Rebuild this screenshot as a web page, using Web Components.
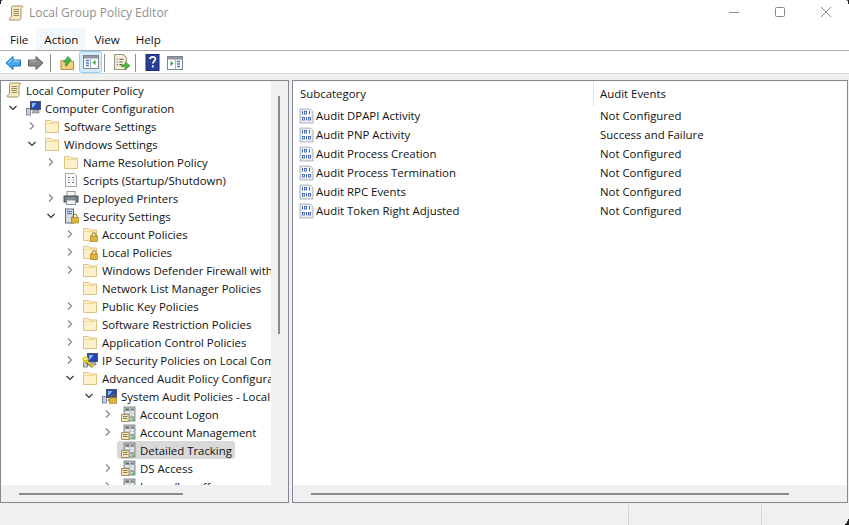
<!DOCTYPE html>
<html>
<head>
<meta charset="utf-8">
<title>Local Group Policy Editor</title>
<style>
    html, body { margin: 0; height: 100%; overflow: hidden; }
    body { font-family: "Open Sans", "Noto Sans", "Liberation Sans", sans-serif; font-size: 11.4px; color: #111; background: #f0f0f0; }
</style>
</head>
<body>
<gp-window>
    <gp-titlebar slot="title">Local Group Policy Editor</gp-titlebar>
    <gp-menubar slot="menu"></gp-menubar>
    <gp-toolbar slot="tools"></gp-toolbar>
    <gp-tree slot="left"></gp-tree>
    <gp-list slot="right"></gp-list>
    <gp-statusbar slot="status"></gp-statusbar>
</gp-window>

<script>
const lockShape = (x, y) => `
    <path d="M${x + 1.5} ${y + 3}v-1.2a2 2 0 0 1 4 0V${y + 3}" fill="none" stroke="#8a6a1c" stroke-width="1"/>
    <rect x="${x}" y="${y + 3}" width="7" height="5.5" fill="#e2b437" stroke="#a67f1e" stroke-width=".7"/>`;

const folderShape = `
    <path d="M1.500 2.500h5l1.200 1.500h6.800v10.500h-13z" fill="#fdf1cb" stroke="#dfc27f"/>
    <path d="M2.500 5.500h11" stroke="#f3d994"/>`;

const computerShape = `
    <rect x="1.500" y="8.500" width="4" height="6.500" fill="#c9ced6" stroke="#6c7585" stroke-width=".8"/>
    <rect x="5.500" y="1.500" width="10" height="8" fill="#2446b8" stroke="#4f5663"/>
    <path d="M7 3h4.500l-3.500 4.500H7z" fill="#86b6f5"/>
    <path d="M8 10.500h6v2.500H7z" fill="#aeb4bd" stroke="#6d7480" stroke-width=".6"/>`;

// one = a stroke, zero = a small hollow box, same as the tiny bit pattern on the audit pages
const bitOne = (x, y) => `<path d="M${x + .5} ${y}v3.500" stroke="#3f63b0"/>`;
const bitZero = (x, y) => `<rect x="${x + .5}" y="${y + .5}" width="2" height="2.500" fill="none" stroke="#3f63b0" stroke-width=".9"/>`;

const ICONS = {
    scroll: `<path d="M3.500 2.500c0-1 .6-1.500 1.500-1.500h9c.8 0 1 .9.5 1.500-.4.5-1.500.5-1.500 1.500v8.500c0 1.500-.8 2.500-2 2.500H2c-1 0-1.300-1-.6-1.600.8-.6 2.100-.9 2.100-2.400z" fill="#f5eac0" stroke="#a09268"/>
        <path d="M5.500 4.500h5.500M5.500 6.500h5.500M5.500 8.500h5.500M5.500 10.500h5.500" stroke="#94895f"/>`,
    computer: computerShape,
    folder: folderShape,
    folderlock: folderShape + lockShape(8.500, 7),
    scripts: `<path d="M2.500 1.500h9l2 2v11h-11z" fill="#fbfbfb" stroke="#a3a7b0"/>
        <path d="M5 5.500h2M9 5.500h2M5 8h1M10 8h1M5 10.500h2M9 10.500h2" stroke="#6f7782"/>`,
    printer: `<rect x="4" y="1.500" width="8" height="5" fill="#f4f4f4" stroke="#9a9a9a"/>
        <rect x="1" y="6" width="14" height="6" fill="#6d737b" stroke="#4e535a"/>
        <rect x="3.500" y="10" width="9" height="4.500" fill="#eef3f3" stroke="#8b9396"/>
        <path d="M2.500 8h11" stroke="#a3a8ae"/>`,
    security: `<rect x="2.500" y="1" width="8" height="14" fill="#d5dae3" stroke="#626b7b"/>
        <path d="M4 3.500h5M4 5.500h5" stroke="#4f74ad"/>` + lockShape(8.500, 6.500),
    ipsec: computerShape + `<circle cx="3.500" cy="7.500" r="2.200" fill="none" stroke="#efd000" stroke-width="1.700"/>
        <path d="M5 9.500l6.500 5.500" stroke="#ecca00" stroke-width="1.800"/><path d="M3.500 10.500l6.500 5" stroke="#222" stroke-width=".7"/>`,
    audit: computerShape + lockShape(8.500, 6.800),
    category: `<rect x="4" y="1" width="11" height="14" fill="#c4c8cc" stroke="#73787e" stroke-width=".8"/>
        <rect x="5.500" y="2.500" width="3.500" height="2" fill="#5f666d"/><rect x="10.500" y="2.500" width="3.500" height="2" fill="#7d848b"/>
        <rect x="5.500" y="5.500" width="3.500" height="1.500" fill="#eef0f2"/><rect x="10.500" y="5.500" width="3.500" height="1.500" fill="#eef0f2"/>
        <rect x="10.500" y="8" width="3.500" height="1.500" fill="#eef0f2"/><rect x="10.500" y="10.500" width="3.500" height="1.500" fill="#8f959b"/>
        <path d="M1.500 8.500h7.500v7H1.500z" fill="#f4e7b8" stroke="#8a7d52" stroke-width=".8"/>
        <path d="M3 10.500h4.500M3 12.500h4.500" stroke="#8a7d52"/>
        <rect x="12.500" y="12.800" width="2" height="2" fill="#2fc436"/>`,
    bits: `<path d="M1 1h10.500l2.500 2.500V15H1z" fill="#dfe1e8" stroke="#a3a8b3" stroke-width=".8"/>
        <rect x="2.500" y="2.500" width="10" height="11" fill="#fbfcfe"/>`
        + bitOne(3, 3) + bitZero(5, 3) + bitOne(10, 3)
        + bitZero(3, 9) + bitOne(7, 9) + bitZero(9, 9),
    back: `<path d="M1 8l7-6.500V5h7.500v6H8v3.500z" fill="#45a7ee" stroke="#1f6fb8"/><path d="M3 8l4-3.500M8.500 6h6" stroke="#b4e0ff"/>`,
    forward: `<path d="M15 8L8 1.500V5H.5v6H8v3.500z" fill="#8a8a8a" stroke="#5e5e5e"/><path d="M1.500 6H8" stroke="#b5b5b5"/>`,
    up: `<path d="M1 6h5l1 1h7.500v8.500H1z" fill="#f2cf7b" stroke="#a88746"/>
        <path d="M6 12V7L3.800 7.500 8.500 1.500l3.700 4.200-2.200.3c-.3 2.500-1.500 4.500-4 6z" fill="#45b649" stroke="#2a8531" stroke-width=".7"/>`,
    hidetree: `<rect x=".5" y="1.500" width="15" height="13" fill="#fff" stroke="#7c8590"/><rect x="1" y="2" width="14" height="2.500" fill="#8e96a1"/>
        <path d="M3 6.500h3M3 9h3M3 11.500h3" stroke="#4a7cc4" stroke-width="1.400"/><path d="M7.500 4.500v10" stroke="#aab1ba"/>
        <path d="M12.500 6v5L9.500 8.500z" fill="#2fa53a"/>`,
    showtree: `<rect x=".5" y="1.500" width="15" height="13" fill="#fff" stroke="#7c8590"/><rect x="1" y="2" width="14" height="2.500" fill="#8e96a1"/>
        <path d="M10 6.500h3M10 9h3M10 11.500h3" stroke="#4a7cc4" stroke-width="1.400"/><path d="M8.500 4.500v10" stroke="#aab1ba"/>
        <path d="M3.500 6v5L6.500 8.500z" fill="#2fa53a"/>`,
    exportlist: `<path d="M1.500 .5h8l3 3v11h-11z" fill="#f7f1da" stroke="#9b9682"/>
        <path d="M3.500 5h1M6 5h4M3.500 7.500h1M6 7.500h3M3.500 10h1M6 10h2" stroke="#555"/>
        <path d="M8 10h3.500V7.500L16 11l-4.500 3.500V12H8z" fill="#4cbb3d" stroke="#2b8a25" stroke-width=".6"/>`,
    help: `<rect x=".5" y=".5" width="13" height="16" fill="#2b3f97" stroke="#1c2a6b"/>
        <path d="M4.400 5.200c.2-1.600 1.300-2.400 2.800-2.400 1.600 0 2.700 1 2.700 2.300 0 1.200-.7 1.800-1.500 2.400-.7.5-1 1-1 2" fill="none" stroke="#fff" stroke-width="1.700"/>
        <rect x="6.400" y="11.400" width="1.800" height="2" fill="#fff"/>`
};

class GpIcon extends HTMLElement {
    constructor() {
        super();
        this.attachShadow({ mode: 'open' });
    }

    connectedCallback() {
        const size = this.getAttribute('size') || 16;
        const box = this.getAttribute('box') || '0 0 16 16';
        this.shadowRoot.innerHTML = `
            <style>
                :host { display: inline-flex; flex: none; width: ${size}px; height: ${size}px; }
                svg { display: block; width: 100%; height: 100%; }
            </style>
            <svg viewBox="${box}" xmlns="http://www.w3.org/2000/svg">${ICONS[this.getAttribute('name')] || ''}</svg>
        `;
    }
}

class GpWindow extends HTMLElement {
    constructor() {
        super();
        this.attachShadow({ mode: 'open' });
        this.shadowRoot.innerHTML = `
            <style>
                :host { display: flex; flex-direction: column; position: relative; width: 849px; height: 525px; overflow: hidden; }
                .panes { display: flex; gap: 3px; height: 423px; margin-top: 6px; padding-right: 1px; }
                ::slotted([slot="left"]) { width: 289px; }
                ::slotted([slot="right"]) { flex: 1; }
                /* the desktop showing through behind the rounded window corners */
                .corner { position: absolute; display: block; fill: #222; }
                .tl { left: 0; top: 0; width: 3px; height: 4px; }
                .tr { right: 0; top: 0; width: 3px; height: 4px; }
                .br { right: 0; bottom: 0; width: 4px; height: 6px; }
            </style>
            <slot name="title"></slot>
            <slot name="menu"></slot>
            <slot name="tools"></slot>
            <div class="panes">
                <slot name="left"></slot>
                <slot name="right"></slot>
            </div>
            <slot name="status"></slot>
            <svg class="corner tl" viewBox="0 0 3 4"><path d="M0 0h3L1 1v3H0z"/></svg>
            <svg class="corner tr" viewBox="0 0 3 4"><path d="M0 0h3v4H2V1z"/></svg>
            <svg class="corner br" viewBox="0 0 4 6"><path d="M4 0v6H0V5h1V4h1V2h1V0z"/></svg>
        `;
    }
}

class GpTitlebar extends HTMLElement {
    constructor() {
        super();
        this.attachShadow({ mode: 'open' });
        this.shadowRoot.innerHTML = `
            <style>
                :host { display: flex; align-items: flex-start; height: 28px; background: #fff; color: #8f8f8f; font-size: 12px; padding-left: 8px; }
                gp-icon { margin: 5px 5px 0 0; }
                .text { flex: 1; line-height: 26px; }
                .ctls { display: flex; }
                .ctl { display: flex; width: 46px; height: 24px; align-items: center; justify-content: center; }
                svg { width: 12px; height: 12px; display: block; }
                path, rect { fill: none; stroke: #8a8a8a; }
            </style>
            <gp-icon name="scroll"></gp-icon>
            <span class="text"><slot></slot></span>
            <div class="ctls">
                <div class="ctl"><svg viewBox="0 0 12 12"><path d="M1 6.500h10"/></svg></div>
                <div class="ctl"><svg viewBox="0 0 12 12"><rect x="1.500" y="1.500" width="9" height="9" rx="1"/></svg></div>
                <div class="ctl"><svg viewBox="0 0 12 12"><path d="M1 1l10 10M11 1L1 11"/></svg></div>
            </div>
        `;
    }
}

class GpMenubar extends HTMLElement {
    constructor() {
        super();
        this.attachShadow({ mode: 'open' });
        const items = ['File', 'Action', 'View', 'Help'];
        this.shadowRoot.innerHTML = `
            <style>
                :host { display: flex; height: 22px; background: #fff; border-bottom: 1px solid #a9a9a9; padding-left: 2px; color: #111; font-size: 11.600px; }
                div { display: flex; align-items: center; padding: 0 8px; }
                .hot { background: #f3f8fc; }
            </style>
            ${items.map(m => `<div class="${m === 'Action' ? 'hot' : ''}">${m}</div>`).join('')}
        `;
    }
}

class GpToolbar extends HTMLElement {
    constructor() {
        super();
        this.attachShadow({ mode: 'open' });
        this.shadowRoot.innerHTML = `
            <style>
                :host { display: flex; align-items: center; height: 21px; padding-top: 1px; background: #fff; border-bottom: 1px solid #dadada; padding-left: 5px; }
                .sep { width: 1px; height: 18px; background: #8f8f8f; flex: none; }
                .on { display: flex; align-items: center; justify-content: center; box-sizing: border-box; width: 23px; height: 22px; margin-top: -1px; background: #d5ebfb; border: 1px solid #98cff5; border-radius: 3px; }
            </style>
            <gp-icon name="back"></gp-icon>
            <gp-icon name="forward" style="margin-left:7px"></gp-icon>
            <div class="sep" style="margin-left:6px"></div>
            <gp-icon name="up" size="15" style="margin-left:9px"></gp-icon>
            <div class="on" style="margin-left:4px"><gp-icon name="hidetree"></gp-icon></div>
            <div class="sep" style="margin-left:2px"></div>
            <gp-icon name="exportlist" size="17" style="margin-left:8px"></gp-icon>
            <div class="sep" style="margin-left:5px"></div>
            <gp-icon name="help" size="17" box="0 0 14 17" style="margin-left:8px"></gp-icon>
            <gp-icon name="showtree" style="margin-left:6px"></gp-icon>
        `;
    }
}

class GpTreeRow extends HTMLElement {
    constructor() {
        super();
        this.attachShadow({ mode: 'open' });
    }

    connectedCallback() {
        const level = Number(this.getAttribute('level'));
        const arrow = this.getAttribute('arrow');
        const chevron = arrow === 'open' ? '<path d="M1.500 3l3.500 3.500L8.500 3" />'
            : arrow === 'closed' ? '<path d="M3 1.500L6.500 5 3 8.500" stroke-opacity=".6"/>' : '';
        const selected = this.hasAttribute('selected');
        const isRoot = level < 0;
        this.shadowRoot.innerHTML = `
            <style>
                :host { display: flex; align-items: center; height: 18px; padding-left: ${isRoot ? 1 : 4 + level * 19}px; white-space: nowrap; }
                .arrow { width: 16px; height: 16px; flex: none; display: ${isRoot ? 'none' : 'flex'}; align-items: center; justify-content: center; }
                .arrow svg { width: 10px; height: 10px; fill: none; stroke: #333; stroke-width: 1.200; }
                .item { display: flex; align-items: center; height: 18px; padding-right: 3px; padding-left: 3px; margin-left: 1px; border-radius: 3px; background: ${selected ? '#d9d9d9' : 'transparent'}; }
                .label { margin-left: 4px; }
            </style>
            <div class="arrow"><svg viewBox="0 0 10 10">${chevron}</svg></div>
            <div class="item">
                <gp-icon name="${this.getAttribute('icon')}"></gp-icon>
                <span class="label"><slot></slot></span>
            </div>
        `;
    }
}

const TREE = [
    [-1, '', 'scroll', 'Local Computer Policy'],
    [0, 'open', 'computer', 'Computer Configuration'],
    [1, 'closed', 'folder', 'Software Settings'],
    [1, 'open', 'folder', 'Windows Settings'],
    [2, 'closed', 'folder', 'Name Resolution Policy'],
    [2, '', 'scripts', 'Scripts (Startup/Shutdown)'],
    [2, 'closed', 'printer', 'Deployed Printers'],
    [2, 'open', 'security', 'Security Settings'],
    [3, 'closed', 'folderlock', 'Account Policies'],
    [3, 'closed', 'folderlock', 'Local Policies'],
    [3, 'closed', 'folder', 'Windows Defender Firewall with Advanced Security'],
    [3, '', 'folder', 'Network List Manager Policies'],
    [3, 'closed', 'folder', 'Public Key Policies'],
    [3, 'closed', 'folder', 'Software Restriction Policies'],
    [3, 'closed', 'folder', 'Application Control Policies'],
    [3, 'closed', 'ipsec', 'IP Security Policies on Local Computer'],
    [3, 'open', 'folder', 'Advanced Audit Policy Configuration'],
    [4, 'open', 'audit', 'System Audit Policies - Local Group Policy Object'],
    [5, 'closed', 'category', 'Account Logon'],
    [5, 'closed', 'category', 'Account Management'],
    [5, '', 'category', 'Detailed Tracking', true],
    [5, 'closed', 'category', 'DS Access'],
    [5, 'closed', 'category', 'Logon/Logoff']
];

class GpTree extends HTMLElement {
    constructor() {
        super();
        this.attachShadow({ mode: 'open' });
    }

    connectedCallback() {
        this.shadowRoot.innerHTML = `
            <style>
                :host { display: grid; grid-template-columns: 1fr 17px; grid-template-rows: 1fr 17px; box-sizing: border-box; border: 1px solid #828790; background: #fff; overflow: hidden; }
                .rows { overflow: hidden; background: #fff; min-width: 0; min-height: 0; }
                .vbar { background: #f0f0f0; padding: 15px 8px 0 7px; display: flex; }
                .vbar i { display: block; width: 2px; height: 238px; background: #8a8a8a; }
                .hbar { background: #f0f0f0; grid-column: 1 / 3; padding: 8px 0 0 18px; }
                .hbar i { display: block; width: 164px; height: 2px; background: #8a8a8a; }
            </style>
            <div class="rows">
                ${TREE.map(([level, arrow, icon, text, sel]) => `<gp-tree-row level="${level}" arrow="${arrow}" icon="${icon}" ${sel ? 'selected' : ''}>${text}</gp-tree-row>`).join('')}
            </div>
            <div class="vbar"><i></i></div>
            <div class="hbar"><i></i></div>
        `;
    }
}

const AUDIT = [
    ['Audit DPAPI Activity', 'Not Configured'],
    ['Audit PNP Activity', 'Success and Failure'],
    ['Audit Process Creation', 'Not Configured'],
    ['Audit Process Termination', 'Not Configured'],
    ['Audit RPC Events', 'Not Configured'],
    ['Audit Token Right Adjusted', 'Not Configured']
];

class GpList extends HTMLElement {
    constructor() {
        super();
        this.attachShadow({ mode: 'open' });
    }

    connectedCallback() {
        this.shadowRoot.innerHTML = `
            <style>
                :host { display: flex; flex-direction: column; box-sizing: border-box; border: 1px solid #828790; background: #fff; overflow: hidden; }
                .head { display: grid; grid-template-columns: 300px 1fr; height: 25px; }
                .head div { display: flex; align-items: center; padding-left: 7px; }
                .head div + div { border-left: 1px solid #e5e5e5; padding-left: 6px; }
                .body { flex: 1; }
                .row { display: grid; grid-template-columns: 301px 1fr; height: 19px; align-items: center; }
                .name { display: flex; align-items: center; padding-left: 6px; gap: 1px; }
                .val { padding-left: 6px; }
                .hbar { height: 17px; background: #f0f0f0; padding: 8px 0 0 18px; box-sizing: border-box; }
                .hbar i { display: block; width: 478px; height: 2px; background: #8a8a8a; }
            </style>
            <div class="head"><div>Subcategory</div><div>Audit Events</div></div>
            <div class="body">
                ${AUDIT.map(([name, val]) => `<div class="row"><div class="name"><gp-icon name="bits"></gp-icon><span>${name}</span></div><div class="val">${val}</div></div>`).join('')}
            </div>
            <div class="hbar"><i></i></div>
        `;
    }
}

class GpStatusbar extends HTMLElement {
    constructor() {
        super();
        this.attachShadow({ mode: 'open' });
        this.shadowRoot.innerHTML = `
            <style>
                :host { display: grid; grid-template-columns: 629px 133px 1fr; flex: 1; background: #f0f0f0; padding-top: 2px; box-sizing: border-box; }
                div { border-right: 1px solid #d7d7d7; }
                div:last-child { border-right: none; }
            </style>
            <div></div><div></div><div></div>
        `;
    }
}

customElements.define('gp-icon', GpIcon);
customElements.define('gp-window', GpWindow);
customElements.define('gp-titlebar', GpTitlebar);
customElements.define('gp-menubar', GpMenubar);
customElements.define('gp-toolbar', GpToolbar);
customElements.define('gp-tree-row', GpTreeRow);
customElements.define('gp-tree', GpTree);
customElements.define('gp-list', GpList);
customElements.define('gp-statusbar', GpStatusbar);
</script>
</body>
</html>
